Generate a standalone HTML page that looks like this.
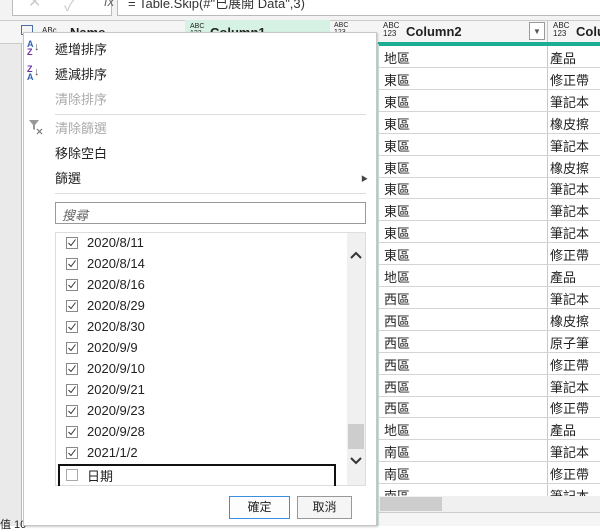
<!DOCTYPE html>
<html><head><meta charset="utf-8"><style>
*{margin:0;padding:0;box-sizing:border-box}
body{width:600px;height:526px;overflow:hidden;background:#fff;position:relative;font-family:"Liberation Sans","Noto Sans CJK TC",sans-serif;font-size:13px;color:#222}
.a{position:absolute}
.row{position:absolute;left:378px;width:230px;height:22px;border-bottom:1px solid #d4d4d4}
.row span{position:absolute;top:2px}
.it{position:absolute;left:55px;font-size:13px}
.ck{position:absolute;left:66px;width:12px;height:12px;border:1px solid #888;background:#fff}
.ck svg{position:absolute;left:0;top:0}
.dt{position:absolute;left:87px;font-size:13px}
</style></head><body>
<div class="a" style="left:0;top:0;width:600px;height:20px;background:#f3f3f3"></div>
<div class="a" style="left:12px;top:0;width:100px;height:16px;background:#fff;border:1px solid #bbb;border-top:none"></div>
<div class="a" style="left:28px;top:-8px;color:#ccc;font-size:16px">✕</div>
<div class="a" style="left:64px;top:-8px;color:#ccc;font-size:16px">✓</div>
<div class="a" style="left:104px;top:-6px;color:#666;font-size:13px;font-style:italic">fx</div>
<div class="a" style="left:117px;top:0;width:490px;height:16px;background:#fff;border:1px solid #bbb;border-top:none"></div>
<div class="a" style="left:128px;top:-7px;font-size:13px;color:#333">= Table.Skip(#"已展開 Data",3)</div>
<div class="a" style="left:0;top:20px;width:600px;height:24px;background:#f5f5f5;border-top:1px solid #ccc;border-bottom:1px solid #ccc"></div>
<div class="a" style="left:185px;top:20px;width:145px;height:24px;background:#d5f2e5"></div>
<div class="a" style="left:21px;top:25px;width:12px;height:10px;border:1px solid #4a6fa5"></div>
<div class="a" style="left:42px;top:26px;font-size:8px">ABc</div>
<div class="a" style="left:70px;top:25px;font-weight:bold">Name</div>
<div class="a" style="left:190px;top:23px;font-size:7px;line-height:7px">ABC<br>123</div>
<div class="a" style="left:210px;top:25px;font-weight:bold">Column1</div>
<div class="a" style="left:334px;top:22px;font-size:7px;line-height:7px">ABC<br>123</div>
<div class="a" style="left:383px;top:22px;font-size:8px;line-height:8px">ABC<br>123</div>
<div class="a" style="left:406px;top:24px;font-weight:bold">Column2</div>
<div class="a" style="left:529px;top:22px;width:16px;height:18px;border:1px solid #999;background:#fff;font-size:8px;text-align:center;line-height:17px;color:#555">▼</div>
<div class="a" style="left:547px;top:20px;width:1px;height:478px;background:#c8c8c8"></div>
<div class="a" style="left:553px;top:22px;font-size:8px;line-height:8px">ABC<br>123</div>
<div class="a" style="left:576px;top:24px;font-weight:bold">Colu</div>
<div class="a" style="left:378px;top:42px;width:222px;height:4px;background:#1aae96"></div>
<div class="a" style="left:0;top:44px;width:22px;height:482px;background:#eaeaea;border-right:1px solid #bbb"></div>
<div class="a" style="left:0;top:516px;font-size:11px">值 10</div>
<div id="rows"></div>
<div class="a" style="left:378px;top:496px;width:222px;height:16px;background:#f0f0f0"></div>
<div class="a" style="left:380px;top:497px;width:62px;height:14px;background:#cdcdcd"></div>
<div class="a" style="left:378px;top:512px;width:222px;height:14px;background:#f5f5f5;border-top:1px solid #ccc"></div>
<div class="a" style="left:377px;top:44px;width:2px;height:482px;background:#d0ecdf"></div>
<div class="a" style="left:23px;top:32px;width:354px;height:494px;background:#fff;border:1px solid #c6c6c6;box-shadow:1px 1px 2px rgba(0,0,0,.2)"></div>
<div class="a" style="left:27px;top:40px;font-size:9px;line-height:8px;color:#2b5fb3;font-weight:bold">A<br><span style="color:#7030a0">Z</span></div><div class="a" style="left:34px;top:41px;font-size:11px;color:#555">↓</div>
<div class="a" style="left:27px;top:65px;font-size:9px;line-height:8px;color:#7030a0;font-weight:bold">Z<br><span style="color:#2b5fb3">A</span></div><div class="a" style="left:34px;top:66px;font-size:11px;color:#555">↓</div>
<div class="it" style="top:39px">遞增排序</div>
<div class="it" style="top:64px">遞減排序</div>
<div class="it" style="top:89px;color:#aaa">清除排序</div>
<div class="a" style="left:55px;top:114px;width:311px;height:1px;background:#ddd"></div>
<svg class="a" style="left:28px;top:119px" width="16" height="16"><path d="M1 1 H11 L7 6 V11 L5 10 V6 Z" fill="#999"/><path d="M9 10 L14 15 M14 10 L9 15" stroke="#777" stroke-width="1.2"/></svg>
<div class="it" style="top:118px;color:#aaa">清除篩選</div>
<div class="it" style="top:143px">移除空白</div>
<div class="it" style="top:168px">篩選</div>
<div class="a" style="left:361px;top:174px;font-size:7px;color:#444">▶</div>
<div class="a" style="left:55px;top:193px;width:311px;height:1px;background:#ddd"></div>
<div class="a" style="left:55px;top:202px;width:311px;height:22px;border:1px solid #999"></div>
<div class="a" style="left:62px;top:205px;font-style:italic;color:#666">搜尋</div>
<div class="a" style="left:55px;top:232px;width:311px;height:254px;border:1px solid #ddd"></div>
<div class="a" style="left:347px;top:233px;width:18px;height:252px;background:#f0f0f0"></div>
<div class="a" style="left:348px;top:424px;width:16px;height:25px;background:#cdcdcd"></div>
<svg class="a" style="left:349px;top:250px" width="14" height="10"><path d="M2 8 L7 3 L12 8" stroke="#333" stroke-width="2" fill="none"/></svg>
<svg class="a" style="left:349px;top:456px" width="14" height="10"><path d="M2 2 L7 7 L12 2" stroke="#333" stroke-width="2" fill="none"/></svg>
<div id="dates"></div>
<div class="a" style="left:58px;top:464px;width:278px;height:22px;border:2px solid #111;border-bottom:none"></div>
<div class="a" style="left:66px;top:469px;width:12px;height:12px;border:1px solid #aaa"></div>
<div class="a" style="left:87px;top:466px">日期</div>
<div class="a" style="left:229px;top:496px;width:61px;height:23px;border:1px solid #3c8fdc;background:#fdfdfd;text-align:center;line-height:21px;font-size:12px">確定</div>
<div class="a" style="left:297px;top:496px;width:55px;height:23px;border:1px solid #999;background:#f5f5f5;text-align:center;line-height:21px;font-size:12px">取消</div>
<script>
var c2=["地區","東區","東區","東區","東區","東區","東區","東區","東區","東區","地區","西區","西區","西區","西區","西區","西區","地區","南區","南區","南區"];
var c3=["產品","修正帶","筆記本","橡皮擦","筆記本","橡皮擦","筆記本","筆記本","筆記本","修正帶","產品","筆記本","橡皮擦","原子筆","修正帶","筆記本","修正帶","產品","筆記本","修正帶","筆記本"];
var h="";for(var i=0;i<c2.length;i++){h+='<div class="row" style="top:'+(46+i*21.9)+'px"><span style="left:6px">'+c2[i]+'</span><span style="left:172px">'+c3[i]+'</span></div>';}
document.getElementById("rows").innerHTML=h;
var d=["2020/8/11","2020/8/14","2020/8/16","2020/8/29","2020/8/30","2020/9/9","2020/9/10","2020/9/21","2020/9/23","2020/9/28","2021/1/2"];
h="";for(i=0;i<d.length;i++){var y=237+i*21;h+='<div class="ck" style="top:'+y+'px"><svg width="10" height="10"><path d="M1.5 5 L4 7.5 L8.5 1.5" stroke="#333" stroke-width="1" fill="none"/></svg></div><div class="dt" style="top:'+(y-2)+'px">'+d[i]+'</div>';}
document.getElementById("dates").innerHTML=h;
</script>
</body></html>
